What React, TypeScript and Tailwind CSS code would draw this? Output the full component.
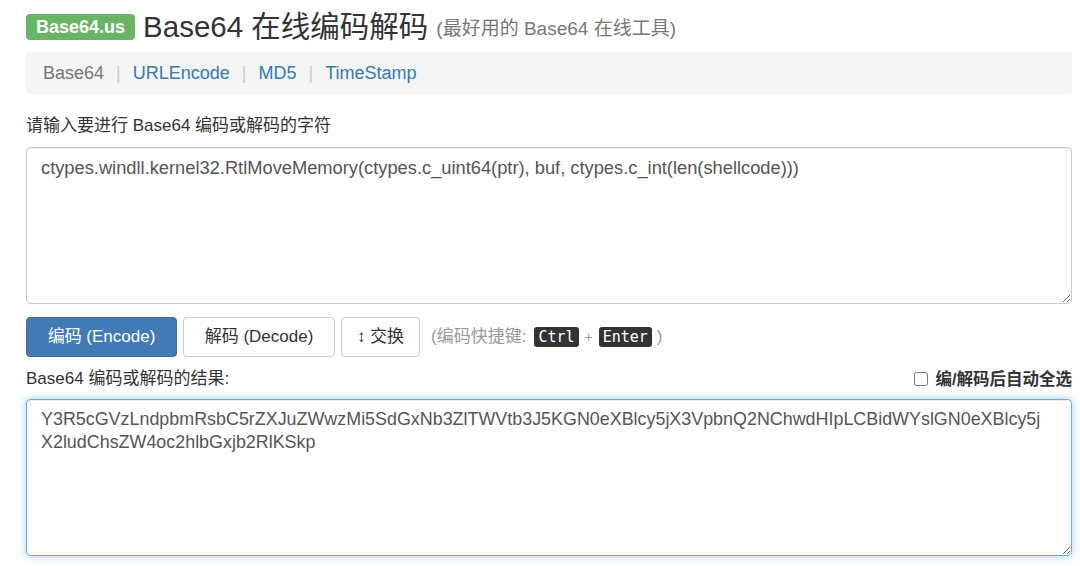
import React from "react";

const font = { fontFamily: '"Liberation Sans", Arial, "Noto Sans CJK SC", sans-serif' };
const mono = { fontFamily: '"DejaVu Sans Mono", "Liberation Mono", monospace' };

const input =
  "ctypes.windll.kernel32.RtlMoveMemory(ctypes.c_uint64(ptr), buf, ctypes.c_int(len(shellcode)))";
const output =
  "Y3R5cGVzLndpbmRsbC5rZXJuZWwzMi5SdGxNb3ZlTWVtb3J5KGN0eXBlcy5jX3VpbnQ2NChwdHIpLCBidWYslGN0eXBlcy5jX2ludChsZW4oc2hlbGxjb2RlKSkp";

export default function App() {
  return (
    <div className="min-h-[566px] bg-white text-[#333]" style={font}>
      <div className="ml-[26px] mr-[8px] pt-[14px]">
        <div className="flex items-center h-[26px]">
          <span className="h-[26px] px-[10px] flex items-center rounded-[4px] bg-[#68b663] text-white font-bold text-[18px]">
            Base64.us
          </span>
          <h1 className="ml-[8px] text-[29.5px] leading-none text-[#333]">Base64 在线编码解码</h1>
          <span className="ml-[8px] mt-[4px] text-[19px] text-[#777]">(最好用的 Base64 在线工具)</span>
        </div>

        <div className="mt-[12px] h-[42px] rounded-[4px] bg-[#f5f5f5] flex items-center px-[17px] text-[18px]">
          <span className="text-[#777]">Base64</span>
          <span className="mx-[12px] text-[#ccc]">|</span>
          <a className="text-[#337ab7]">URLEncode</a>
          <span className="mx-[12px] text-[#ccc]">|</span>
          <a className="text-[#337ab7]">MD5</a>
          <span className="mx-[12px] text-[#ccc]">|</span>
          <a className="text-[#337ab7]">TimeStamp</a>
        </div>

        <div className="mt-[22px] text-[17px] h-[20px] leading-[20px]">请输入要进行 Base64 编码或解码的字符</div>

        <textarea
          className="mt-[11px] block w-full h-[157px] rounded-[4px] border border-[#ccc] px-[14px] py-[8px] text-[18.3px] leading-[23px] text-[#555] outline-none shadow-[inset_0_1px_1px_rgba(0,0,0,0.075)]"
          style={font}
          defaultValue={input}
        />

        <div className="mt-[13px] flex items-center gap-[6px] text-[17px]">
          <button className="h-[40px] w-[151px] rounded-[4px] bg-[#427ab5] border border-[#3a6ea6] text-white">
            编码 (Encode)
          </button>
          <button className="h-[40px] w-[152px] rounded-[4px] bg-white border border-[#ccc] text-[#333]">
            解码 (Decode)
          </button>
          <button className="h-[40px] w-[79px] rounded-[4px] bg-white border border-[#ccc] text-[#333]">
            ↕ 交换
          </button>
          <span className="ml-[5px] text-[#999] text-[17px] flex items-center">
            (编码快捷键:
            <kbd className="ml-[8px] px-[4px] h-[20px] leading-[20px] rounded-[3px] bg-[#333] text-white text-[15px]" style={mono}>
              Ctrl
            </kbd>
            <span className="mx-[6px] text-[14px]">+</span>
            <kbd className="px-[4px] h-[20px] leading-[20px] rounded-[3px] bg-[#333] text-white text-[15px]" style={mono}>
              Enter
            </kbd>
            <span className="ml-[5px]">)</span>
          </span>
        </div>

        <div className="mt-[11px] flex items-center justify-between h-[22px]">
          <span className="text-[17px]">Base64 编码或解码的结果:</span>
          <label className="flex items-center text-[16.5px] font-bold">
            <input type="checkbox" className="w-[14px] h-[14px] mr-[7px]" />
            编/解码后自动全选
          </label>
        </div>

        <textarea
          className="mt-[9px] block w-full h-[157px] rounded-[4px] border border-[#66afe9] pl-[14px] pr-[20px] py-[8px] text-[17.9px] leading-[23px] text-[#555] outline-none shadow-[inset_0_1px_1px_rgba(0,0,0,0.075),0_0_8px_rgba(102,175,233,0.6)]"
          style={font}
          defaultValue={output}
        />
      </div>
    </div>
  );
}
